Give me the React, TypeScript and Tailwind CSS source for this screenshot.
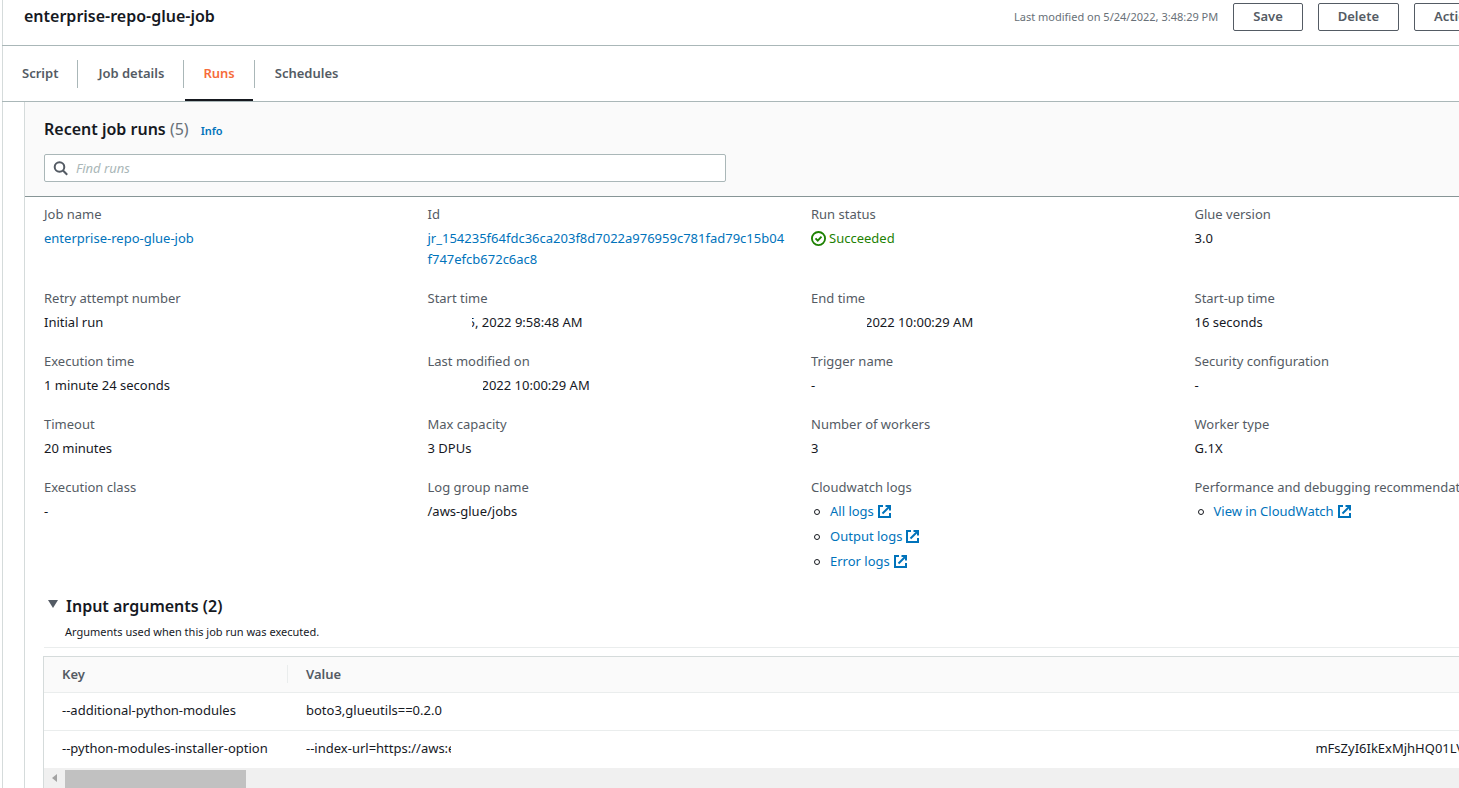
import React, { useState } from 'react';

const tabs = ['Script', 'Job details', 'Runs', 'Schedules'];

const inputArguments = [
  { key: '--additional-python-modules', value: 'boto3,glueutils==0.2.0' },
  { key: '--python-modules-installer-option', value: '--index-url=https://aws:e', hiddenTail: 'mFsZyI6IkExMjhHQ01LV' },
];

const ExternalIcon: React.FC = () => (
  <svg viewBox="0 0 13 13" className="ml-1 h-[13px] w-[13px] shrink-0" fill="none" stroke="#0073bb" strokeWidth="2" aria-hidden="true">
    <path d="M5 1H1v11h11V8" />
    <path d="M7.5 1H12v4.5" />
    <path d="M11.5 1.5L4.5 8.5" />
  </svg>
);

const LogLink: React.FC<{ children: React.ReactNode }> = ({ children }) => (
  <li className="flex items-center leading-[21px]">
    <span className="mr-2.5 ml-[3px] h-[6px] w-[6px] rounded-full border border-[#16191f]" />
    <a href="#" className="flex items-center text-[#0073bb]">
      {children}
      <ExternalIcon />
    </a>
  </li>
);

const Field: React.FC<{ label: string; children: React.ReactNode }> = ({ label, children }) => (
  <div className="min-w-0 pr-6">
    <dt className="leading-5 whitespace-nowrap text-[#545b64]">{label}</dt>
    <dd className="mt-1 leading-[21px]">{children}</dd>
  </div>
);

const ActionButton: React.FC<{ children: React.ReactNode }> = ({ children }) => (
  <button type="button" className="flex h-7 items-center rounded-xs border border-[#545b64] px-[19px] text-[13px] font-semibold text-[#545b64]">
    {children}
  </button>
);

const App: React.FC = () => {
  const [activeTab, setActiveTab] = useState('Runs');
  const [query, setQuery] = useState('');
  const [open, setOpen] = useState(true);

  return (
    <div className="h-screen overflow-hidden bg-white pl-0.5 font-['Noto_Sans','Open_Sans',sans-serif] text-[13px] text-[#16191f]">
      {/* The console is wider than the window, the rest is cut off on the right */}
      <div className="-mr-[119px] min-h-screen border-l border-[#d5dbdb]">
        <header className="-ml-px flex h-[46px] items-start justify-between border-b border-[#aab7b8] pr-[53px] pl-[22px]">
          <h1 className="pt-1 text-base leading-6 font-semibold">enterprise-repo-glue-job</h1>
          <div className="flex items-center gap-[15px] pt-[3px]">
            <span className="text-[11px] text-[#687078]">Last modified on 5/24/2022, 3:48:29 PM</span>
            <ActionButton>Save</ActionButton>
            <ActionButton>Delete</ActionButton>
            <ActionButton>
              Actions
              <svg viewBox="0 0 16 16" className="ml-2 h-4 w-4" fill="currentColor" aria-hidden="true">
                <path d="M3 6h10l-5 5z" />
              </svg>
            </ActionButton>
          </div>
        </header>

        <nav className="-ml-px flex h-14 items-center border-b border-[#aab7b8]">
          {tabs.map((tab) => (
            <div key={tab} className="flex h-full items-center">
              <button
                type="button"
                onClick={() => setActiveTab(tab)}
                className={
                  tab === activeTab
                    ? 'mx-px h-full border-b-2 border-[#16191f] px-[18px] pt-0.5 font-semibold text-[#f66c3b]'
                    : 'h-full pr-[19px] pl-5 font-semibold text-[#545b64]'
                }
              >
                {tab}
              </button>
              {tab !== 'Schedules' && <span className="h-7 w-px bg-[#aab7b8]" />}
            </div>
          ))}
        </nav>

        <main className="ml-[21px] border-l border-[#d5dbdb]">
          <div className="border-b border-[#879596] bg-[#fafafa] px-[19px] pt-[15px] pb-3.5">
            <div className="flex items-baseline">
              <h2 className="text-base leading-6 font-semibold">
                Recent job runs <span className="font-normal text-[#687078]">(5)</span>
              </h2>
              <a href="#" className="ml-3 text-[11px] font-semibold text-[#0073bb]">Info</a>
            </div>
            <label className="mt-[13px] flex h-7 w-[682px] items-center rounded-xs border border-[#aab7b8] bg-white px-2">
              <svg viewBox="0 0 16 16" className="h-4 w-4" fill="none" stroke="#545b64" strokeWidth="2" aria-hidden="true">
                <circle cx="6.5" cy="7" r="4.8" />
                <path d="M10 10.5L14.2 14.7" />
              </svg>
              <input
                type="text"
                aria-label="Find runs"
                placeholder="Find runs"
                value={query}
                onChange={(e) => setQuery(e.target.value)}
                className="ml-[7px] flex-1 pt-0.5 outline-none placeholder:text-[#aab7b8] placeholder:italic"
              />
            </label>
          </div>

          <dl className="grid grid-cols-4 gap-y-[18px] pt-[7px] pl-[19px]">
            <Field label="Job name">
              <a href="#" className="text-[#0073bb]">enterprise-repo-glue-job</a>
            </Field>
            <Field label="Id">
              <a href="#" className="break-all text-[#0073bb]">
                jr_154235f64fdc36ca203f8d7022a976959c781fad79c15b04f747efcb672c6ac8
              </a>
            </Field>
            <Field label="Run status">
              <span className="flex items-center text-[#1d8102]">
                <svg viewBox="0 0 16 16" className="mr-[3px] h-[15px] w-[15px]" fill="none" stroke="currentColor" strokeWidth="2" aria-hidden="true">
                  <circle cx="8" cy="8" r="7" />
                  <path d="M4.8 7.8l2.4 2.4 4-4.2" />
                </svg>
                Succeeded
              </span>
            </Field>
            <Field label="Glue version">3.0</Field>

            <Field label="Retry attempt number">Initial run</Field>
            <Field label="Start time">
              <span className="flex">
                <span className="z-10 -mr-1 w-11 bg-white" />
                5, 2022 9:58:48 AM
              </span>
            </Field>
            <Field label="End time">
              <span className="flex">
                <span className="z-10 -mr-0.5 w-14 bg-white" />
                2022 10:00:29 AM
              </span>
            </Field>
            <Field label="Start-up time">16 seconds</Field>

            <Field label="Execution time">1 minute 24 seconds</Field>
            <Field label="Last modified on">
              <span className="flex">
                <span className="z-10 -mr-px w-[55px] bg-white" />
                2022 10:00:29 AM
              </span>
            </Field>
            <Field label="Trigger name">-</Field>
            <Field label="Security configuration">-</Field>

            <Field label="Timeout">20 minutes</Field>
            <Field label="Max capacity">3 DPUs</Field>
            <Field label="Number of workers">3</Field>
            <Field label="Worker type">G.1X</Field>

            <Field label="Execution class">-</Field>
            <Field label="Log group name">/aws-glue/jobs</Field>
            <Field label="Cloudwatch logs">
              <ul className="space-y-1">
                <LogLink>All logs</LogLink>
                <LogLink>Output logs</LogLink>
                <LogLink>Error logs</LogLink>
              </ul>
            </Field>
            <Field label="Performance and debugging recommendations">
              <ul>
                <LogLink>View in CloudWatch</LogLink>
              </ul>
            </Field>
          </dl>

          <section className="mt-[22px] pl-[18px]">
            <div className="ml-px border-b border-[#eaeded] pb-[7px]">
              <button type="button" onClick={() => setOpen(!open)} className="flex items-center text-base leading-6 font-semibold">
                <svg viewBox="0 0 10 8" className="mr-2 mb-1 ml-1 h-2 w-2.5" fill="#545b64" aria-hidden="true">
                  <path d="M0 0h10L5 8z" />
                </svg>
                Input arguments (2)
              </button>
              <p className="mt-1.5 pl-[21px] text-[11px] leading-4">Arguments used when this job run was executed.</p>
            </div>

            {open && (
              <div className="mt-2 border-t border-l border-[#d5dbdb]">
                <table className="w-full text-left">
                  <thead>
                    <tr className="h-[35px] border-b border-[#eaeded] bg-[#fafafa] text-[#545b64]">
                      <th className="w-[244px] pl-[18px] font-semibold">
                        <span className="flex h-[18px] items-center border-r border-[#eaeded]">Key</span>
                      </th>
                      <th className="pl-[18px] font-semibold">Value</th>
                    </tr>
                  </thead>
                  <tbody>
                    {inputArguments.map((arg) => (
                      <tr key={arg.key} className="h-[38px] border-b border-[#eaeded] last:h-9 last:border-b-0">
                        <td className="pl-[18px] whitespace-nowrap">{arg.key}</td>
                        <td className="pl-[18px] whitespace-nowrap">
                          <span className="flex">
                            {arg.value}
                            {arg.hiddenTail && (
                              <>
                                <span className="z-10 -mr-px -ml-1 w-[865px] bg-white" />
                                {arg.hiddenTail}
                              </>
                            )}
                          </span>
                        </td>
                      </tr>
                    ))}
                  </tbody>
                </table>
                {/* Horizontal scrollbar */}
                <div className="mt-0.5 flex h-5 items-center bg-[#f0f0f0] pl-2">
                  <svg viewBox="0 0 5 8" className="mr-2 h-2 w-[5px]" fill="#a3a3a3" aria-hidden="true">
                    <path d="M5 0v8L0 4z" />
                  </svg>
                  <span className="mt-0.5 h-[18px] w-[181px] bg-[#c1c1c1]" />
                </div>
              </div>
            )}
          </section>
        </main>
      </div>
    </div>
  );
};

export default App;
